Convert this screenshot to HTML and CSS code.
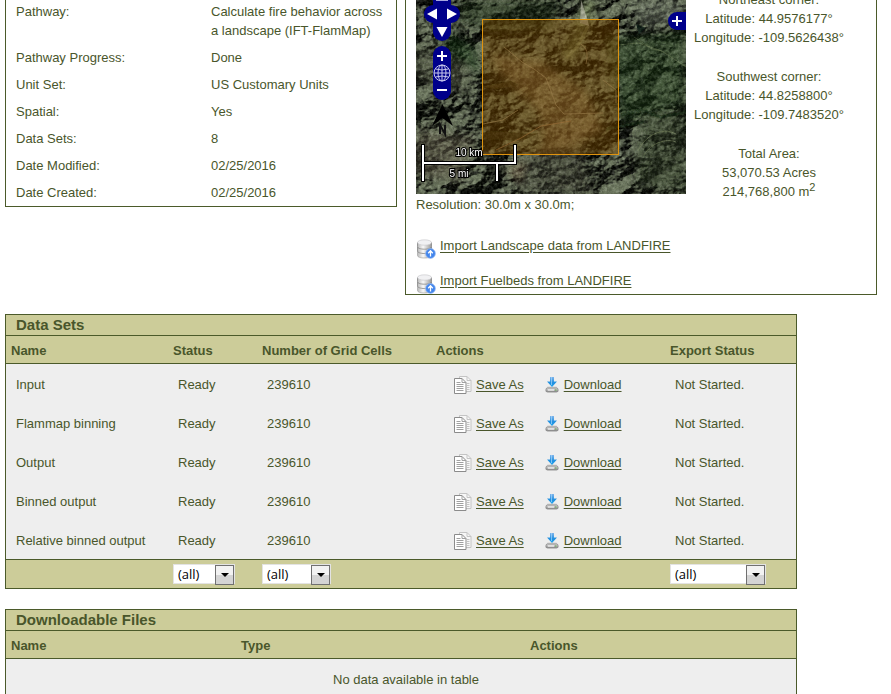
FILE: index.html
```html
<!DOCTYPE html>
<html lang="en">
<head>
<meta charset="utf-8">
<title>Run details</title>
<link rel="stylesheet" href="styles.css">
</head>
<body>
<svg class="defs" aria-hidden="true">
  <defs>
    <linearGradient id="metal" x1="0" x2="1" y1="0" y2="0"><stop offset="0" stop-color="#b9b9b9"/><stop offset=".4" stop-color="#f8f8f8"/><stop offset="1" stop-color="#999"/></linearGradient>
    <linearGradient id="blue" x1="0" x2="0" y1="0" y2="1"><stop offset="0" stop-color="#7fb4ea"/><stop offset=".6" stop-color="#1d8fe0"/><stop offset="1" stop-color="#28a8ee"/></linearGradient>
    <linearGradient id="drive" x1="0" x2="0" y1="0" y2="1"><stop offset="0" stop-color="#e2e2e2"/><stop offset="1" stop-color="#8c8c8c"/></linearGradient>
    <symbol id="i-db" viewBox="0 0 20 20">
      <path d="M1.500 12.500v4c0 1.600 3 2.500 7 2.500s7-1 7-2.500v-4z" fill="url(#metal)" stroke="#9a9a9a" stroke-width=".6"/>
      <path d="M1.500 8v4c0 1.500 3 2.500 7 2.500s7-1 7-2.500V8z" fill="url(#metal)" stroke="#858585" stroke-width=".8"/>
      <path d="M1.500 3.500v4.200c0 1.500 3 2.500 7 2.500s7-1 7-2.500V3.500z" fill="url(#metal)" stroke="#858585" stroke-width=".8"/>
      <ellipse cx="8.500" cy="3.500" rx="7" ry="2.700" fill="#f1f1f3" stroke="#c4c4c8" stroke-width=".6"/>
      <circle cx="14.500" cy="14.500" r="4.900" fill="#4285ec" stroke="#9fc0f3" stroke-width=".7"/>
      <path d="M14.500 17.500v-5.500M12.200 14.300l2.300-2.500 2.300 2.500" fill="none" stroke="#fff" stroke-width="1.300"/>
    </symbol>
    <symbol id="i-copy" viewBox="0 0 18 18">
      <path d="M5.500.5h7.500l4 4v11h-11.500z" fill="#f7f7f7" stroke="#c4c4c4"/>
      <path d="M13 .5v4h4M13 7.500h2.500M13 9.500h2.500M13 11.500h2.500M13 13.500h2.500" fill="none" stroke="#c4c4c4"/>
      <path d="M.5 2.500h7.500l4 4v11H.5z" fill="#fff" stroke="#8b8b8b"/>
      <path d="M8 2.500v4h4M2.500 6.500h4M2.500 8.500h7M2.500 10.500h7M2.500 12.500h7M2.500 14.500h7" fill="none" stroke="#a0a0a0"/>
    </symbol>
    <symbol id="i-down" viewBox="0 0 14 16">
      <path d="M2.500 9.500h9l2.500 5H0z" fill="#d2d2d2"/>
      <rect x="1" y="11" width="12" height="4" rx="1.500" fill="url(#drive)" stroke="#808080" stroke-width=".8"/>
      <path d="M3 13h6" stroke="#fff"/><path d="M10 13h1.500" stroke="#61b24a"/>
      <path d="M5 0h4v4.500h3L7 10 2 4.500h3z" fill="url(#blue)"/>
      <path d="M6.500 0v8" stroke="#a5d5fa" stroke-width=".7"/>
    </symbol>
  </defs>
</svg>
<main class="page">
  <div class="panels">
    <section class="panel">
      <dl class="facts">
        <dt>Pathway:</dt><dd>Calculate fire behavior across a landscape (IFT-FlamMap)</dd>
        <dt>Pathway Progress:</dt><dd>Done</dd>
        <dt>Unit Set:</dt><dd>US Customary Units</dd>
        <dt>Spatial:</dt><dd>Yes</dd>
        <dt>Data Sets:</dt><dd>8</dd>
        <dt>Date Modified:</dt><dd>02/25/2016</dd>
        <dt>Date Created:</dt><dd>02/25/2016</dd>
      </dl>
    </section>
    <section class="panel spatial">
      <div class="extent">
        <div class="map">
          <svg class="map-art" viewBox="0 0 270 194" aria-hidden="true">
            <defs>
              <filter id="terrain" x="0" y="0" width="100%" height="100%" color-interpolation-filters="sRGB">
                <feTurbulence type="fractalNoise" baseFrequency=".026 .036" numOctaves="6" seed="14" result="n"/>
                <feDiffuseLighting in="n" surfaceScale="27" diffuseConstant="1" lighting-color="#7f8970"><feDistantLight azimuth="225" elevation="38"/></feDiffuseLighting>
              </filter>
              <filter id="grain" x="0" y="0" width="100%" height="100%" color-interpolation-filters="sRGB">
                <feTurbulence type="fractalNoise" baseFrequency=".28" numOctaves="3" seed="5"/>
                <feColorMatrix values="1.500 0 0 0 -.53 1.500 0 0 0 -.49 1.500 0 0 0 -.57 0 0 0 0 .22"/>
              </filter>
              <filter id="soft"><feGaussianBlur stdDeviation="4"/></filter>
              <filter id="edge"><feGaussianBlur stdDeviation=".7"/></filter>
            </defs>
            <rect width="270" height="194" fill="#39432f"/>
            <rect width="270" height="194" filter="url(#terrain)"/>
            <g filter="url(#soft)" opacity=".5">
              <path d="M40 0h105l-8 28-60 5-35-12z" fill="#1d2e17"/>
              <path d="M25 28l35 20 5 26-35-15z" fill="#153a17"/>
              <path d="M190 38l80-8v75l-65 20z" fill="#21401f"/>
              <path d="M215 0h55v22l-45 5z" fill="#858d7e"/>
              <path d="M75 55l50 6 45 30 18 40-60 16-5-35-40-40z" fill="#a78a67"/>
              <path d="M0 45l50 20v25L0 80z" fill="#5d604e"/>
              <path d="M90 172l40-28 35-22 20 10-50 25-25 30z" fill="#9c7b5e"/>
              <path d="M0 130l60 6-15 45-45-5z" fill="#746b59"/>
              <path d="M110 155l55-10 10 49H100z" fill="#4b493c"/>
              <path d="M225 115l45-5v84l-50-10z" fill="#34432c"/>
              <path d="M175 0l-15 40-10 18" fill="none" stroke="#94a66c" stroke-width="13"/>
            </g>
            <g filter="url(#edge)">
              <path d="M165 0l6 18 2 8-9-3z" fill="#c9c9b7" opacity=".8"/>
              <path d="M172 26l-10 20-12 12" stroke="#aab17f" fill="none" opacity=".4" stroke-width="3"/>
              <path d="M202 45l20-2 24 8 24 16M225 28l4-3M218 37l18 12 10 2" stroke="#7c8a60" fill="none" opacity=".5"/>
              <path d="M205 115l20-5 20 7 25-5M190 129l38-7" stroke="#12240f" fill="none" stroke-width="3" opacity=".6"/>
              <path d="M222 151c6-14 23-25 38-17M228 155c7-12 22-17 32-13" stroke="#7c8860" fill="none" opacity=".7"/>
              <path d="M67 133c16-5 42 3 56 0l-18 8-38-2z" fill="#171d0e" opacity=".8"/>
              <path d="M65 87l30-6 8 4-22 4z" fill="#2a2817" opacity=".8"/>
              <path d="M220 24l10 4-7 7z" fill="#101d17"/>
            </g>
            <rect width="270" height="194" filter="url(#grain)"/>
            <g fill="none" stroke="#b5a889" opacity=".6">
              <path d="M88 47l18 15 12 7 12 9 5 13 5 14 8 9 39-1"/>
              <path d="M165 44q9 5 5 20M187 80l13 10v13M67 124l20-4 15-10"/>
              <path d="M80 150l25-12 20-12 30-5" stroke="#b68b65"/>
            </g>
            <rect x="66.500" y="19.500" width="136" height="135" fill="#7a4a00" fill-opacity=".45" stroke="#df930f"/>
            <g fill="#00008b">
              <rect x="8" y="5" width="36" height="18" rx="9"/>
              <rect x="17" y="-14" width="18" height="55" rx="9"/>
              <rect x="17" y="46" width="18" height="54" rx="9"/>
              <path d="M270 12h-9a9 9 0 0 0 0 18h9z"/>
            </g>
            <path d="M20 .5h12" stroke="#a6a6df"/>
            <path d="M26.500 104L37 126l-10.500-8L16 126z" fill="#000"/>
            <path d="M24 134v-9l5 9v-9" fill="none" stroke="#111" stroke-width="2"/>
            <g fill="none" stroke-linecap="square">
              <path d="M7 146v34M7 163h92v-17M81 163v17" stroke="#000" stroke-width="4"/>
              <path d="M7 146v34M7 163h92v-17M81 163v17" stroke="#fff" stroke-width="2"/>
            </g>
            <text class="scale" x="53" y="156">10 km</text>
            <text class="scale" x="43" y="177">5 mi</text>
          </svg>
          <button class="ctl west" aria-label="Pan left"><svg viewBox="0 0 18 18"><path d="M13 3.500v11L3 9z"/></svg></button>
          <button class="ctl east" aria-label="Pan right"><svg viewBox="0 0 18 18"><path d="M5 3.500v11L15 9z"/></svg></button>
          <button class="ctl south" aria-label="Pan down"><svg viewBox="0 0 18 18"><path d="M3.500 4h11L9 14z"/></svg></button>
          <button class="ctl in" aria-label="Zoom in"><svg viewBox="0 0 18 18"><path d="M4 8h4V4h2v4h4v2h-4v4H8v-4H4z"/></svg></button>
          <button class="ctl world" aria-label="Full extent"><svg viewBox="0 0 18 18"><g fill="none" stroke="#c9c9ee"><circle cx="9" cy="9" r="8"/><ellipse cx="9" cy="9" rx="4" ry="8"/><path d="M9 1v16M1 9h16M2.500 5q6.500 2 13 0M2.500 13q6.500-2 13 0"/></g></svg></button>
          <button class="ctl out" aria-label="Zoom out"><svg viewBox="0 0 18 18"><path d="M4 8h10v2H4z"/></svg></button>
          <button class="ctl layers" aria-label="Layers"><svg viewBox="0 0 18 18"><path d="M4 8h4V4h2v4h4v2h-4v4H8v-4H4z"/></svg></button>
        </div>
        <div class="coords">
          <p>Northeast corner:<br>Latitude: 44.9576177°<br>Longitude: -109.5626438°</p>
          <p>Southwest corner:<br>Latitude: 44.8258800°<br>Longitude: -109.7483520°</p>
          <p>Total Area:<br>53,070.53 Acres<br>214,768,800 m<sup>2</sup></p>
        </div>
      </div>
      <p class="resolution">Resolution: 30.0m x 30.0m;</p>
      <ul class="imports">
        <li><svg class="db"><use href="#i-db"/></svg><a href="#">Import Landscape data from LANDFIRE</a></li>
        <li><svg class="db"><use href="#i-db"/></svg><a href="#">Import Fuelbeds from LANDFIRE</a></li>
      </ul>
    </section>
  </div>

  <section class="box">
    <h2>Data Sets</h2>
    <table>
      <colgroup><col class="c-name"><col class="c-status"><col class="c-cells"><col class="c-actions"><col></colgroup>
      <thead><tr><th>Name</th><th>Status</th><th>Number of Grid Cells</th><th>Actions</th><th>Export Status</th></tr></thead>
      <tbody>
        <tr><td>Input</td><td>Ready</td><td>239610</td><td><div class="actions"><svg class="copy"><use href="#i-copy"/></svg><a href="#">Save As</a><svg class="down"><use href="#i-down"/></svg><a href="#">Download</a></div></td><td>Not Started.</td></tr>
        <tr><td>Flammap binning</td><td>Ready</td><td>239610</td><td><div class="actions"><svg class="copy"><use href="#i-copy"/></svg><a href="#">Save As</a><svg class="down"><use href="#i-down"/></svg><a href="#">Download</a></div></td><td>Not Started.</td></tr>
        <tr><td>Output</td><td>Ready</td><td>239610</td><td><div class="actions"><svg class="copy"><use href="#i-copy"/></svg><a href="#">Save As</a><svg class="down"><use href="#i-down"/></svg><a href="#">Download</a></div></td><td>Not Started.</td></tr>
        <tr><td>Binned output</td><td>Ready</td><td>239610</td><td><div class="actions"><svg class="copy"><use href="#i-copy"/></svg><a href="#">Save As</a><svg class="down"><use href="#i-down"/></svg><a href="#">Download</a></div></td><td>Not Started.</td></tr>
        <tr><td>Relative binned output</td><td>Ready</td><td>239610</td><td><div class="actions"><svg class="copy"><use href="#i-copy"/></svg><a href="#">Save As</a><svg class="down"><use href="#i-down"/></svg><a href="#">Download</a></div></td><td>Not Started.</td></tr>
      </tbody>
      <tfoot><tr>
        <td></td>
        <td><span class="pick pick-s"><select aria-label="Status"><option>(all)</option></select></span></td>
        <td><span class="pick pick-m"><select aria-label="Number of Grid Cells"><option>(all)</option></select></span></td>
        <td></td>
        <td><span class="pick pick-l"><select aria-label="Export Status"><option>(all)</option></select></span></td>
      </tr></tfoot>
    </table>
  </section>

  <section class="box">
    <h2>Downloadable Files</h2>
    <table>
      <colgroup><col class="f-name"><col class="f-type"><col></colgroup>
      <thead><tr><th>Name</th><th>Type</th><th>Actions</th></tr></thead>
      <tbody><tr><td class="empty" colspan="3">No data available in table</td></tr></tbody>
    </table>
  </section>
</main>
</body>
</html>
```
FILE: styles.css
```css
* { box-sizing: border-box; }
html { overflow: hidden; }
body {
  margin: 0;
  background: #fff;
  color: #49562b;
  font: 13px/19px "Liberation Sans", Arial, sans-serif;
}
p, dl, dd, ul, h2 { margin: 0; padding: 0; }
ul { list-style: none; }
a { color: inherit; text-underline-offset: 2px; }
.defs { position: absolute; width: 0; height: 0; }
.page { padding: 0 14px 0 5px; }

.panels {
  display: grid;
  grid-template-columns: 392fr 472fr;
  gap: 8px;
  align-items: start;
  margin-bottom: 19px;
}
.panel { border: 1px solid #4b5a2a; border-top: 0; }
.facts {
  display: grid;
  grid-template-columns: 195px 1fr;
  row-gap: 8px;
  padding: 2px 10px 4px;
}
.spatial { padding: 0 0 1px 10px; }
.extent { display: flex; height: 194px; margin-bottom: 1px; }
.coords {
  flex: 1;
  display: flex;
  flex-direction: column;
  gap: 20px;
  margin-top: -10px;
  padding-right: 24px;
  text-align: center;
}
sup { font-size: 11px; line-height: 0; }
.imports { display: grid; gap: 11px; padding-top: 20px; }
.imports li { display: flex; align-items: start; gap: 4px; height: 24px; padding-top: 2px; }
.db { width: 20px; height: 20px; margin-top: 3px; }

.map { position: relative; flex: 0 0 270px; overflow: hidden; }
.map-art { display: block; width: 270px; height: 194px; }
.scale {
  fill: #fff;
  stroke: #000;
  stroke-width: 2px;
  paint-order: stroke;
  font-size: 10px;
  text-anchor: middle;
}
.ctl {
  position: absolute;
  width: 18px;
  height: 18px;
  padding: 0;
  border: 0;
  background: none;
  fill: #fff;
}
.ctl svg { display: block; width: 18px; height: 18px; }
.west { left: 8px; top: 5px; }
.east { left: 26px; top: 5px; }
.south { left: 17px; top: 23px; }
.in { left: 17px; top: 47px; }
.world { left: 17px; top: 64px; }
.out { left: 17px; top: 81px; }
.layers { right: 0; top: 12px; }

.box { width: calc(100% - 80px); margin-bottom: 20px; border: 1px solid #4b5a2a; background: #cccc99; }
.box h2 { height: 20px; padding-left: 10px; font-size: 15px; line-height: 20px; }
table { width: 100%; border-collapse: separate; border-spacing: 0; table-layout: fixed; }
th, td { padding: 0 0 0 5px; text-align: left; vertical-align: middle; white-space: nowrap; }
th { height: 29px; padding-top: 2px; border-top: 1px solid #4b5a2a; border-bottom: 1px solid #4b5a2a; }
tbody td { height: 39px; padding: 2px 0 0 10px; background: #eee; }
tfoot td { height: 29px; border-top: 1px solid #4b5a2a; }
.c-name { width: 162px; }
.c-status { width: 89px; }
.c-cells { width: 174px; }
.c-actions { width: 234px; }
.f-name { width: 230px; }
.f-type { width: 289px; }
tbody td.empty { text-align: center; }
.actions { display: flex; align-items: center; padding-left: 13px; }
.copy { width: 18px; height: 18px; margin-right: 4px; }
.down { width: 14px; height: 16px; margin: 0 5px 0 21px; }

.pick { display: block; position: relative; height: 20px; }
.pick-s { width: 62px; }
.pick-m { width: 69px; }
.pick-l { width: 96px; }
.pick select {
  display: block;
  width: 100%;
  height: 20px;
  padding: 0 0 0 4px;
  border: 1px solid #e3e3e3;
  border-radius: 0;
  background: #fff;
  color: #000;
  font: 13px/18px "Open Sans", sans-serif;
  appearance: none;
}
.pick::before {
  content: "";
  position: absolute;
  right: 1px;
  top: 1px;
  width: 17px;
  height: 18px;
  border: 1px solid #707070;
  background: linear-gradient(#f2f2f2 50%, #d4d4d4 50%);
  pointer-events: none;
}
.pick::after {
  content: "";
  position: absolute;
  right: 6px;
  top: 9px;
  border: 4px solid transparent;
  border-top-color: #000;
  border-bottom: 0;
  pointer-events: none;
}
```
